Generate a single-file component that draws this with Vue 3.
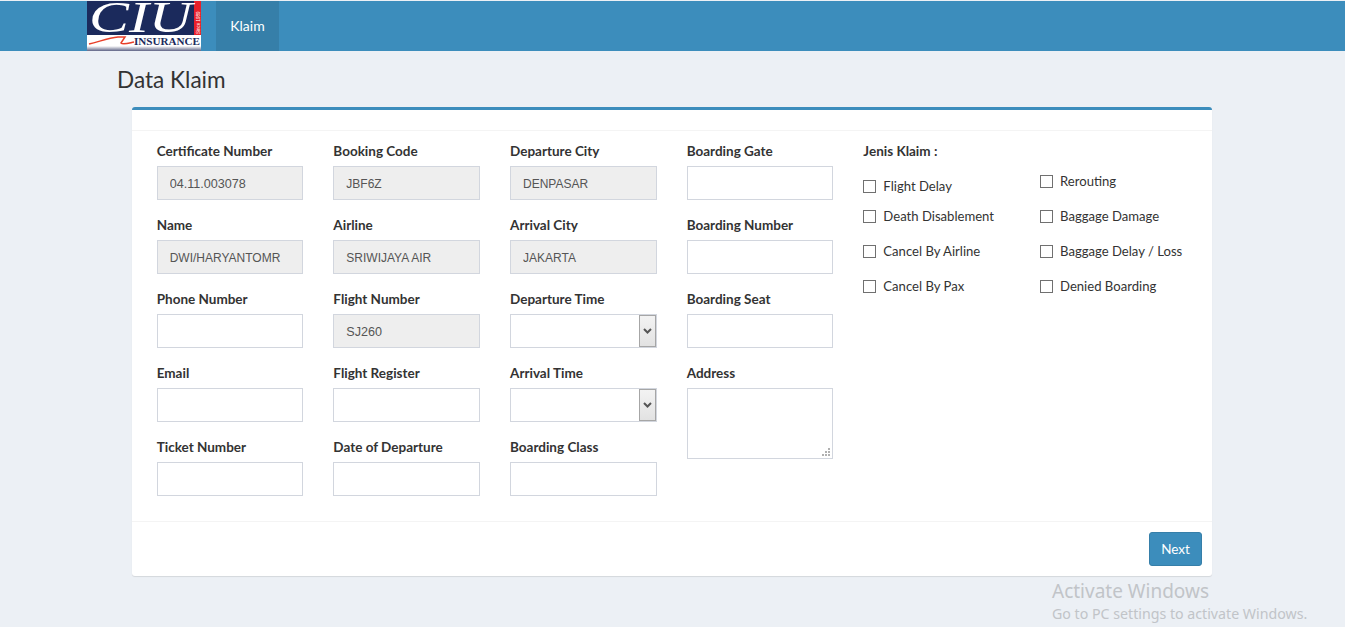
<script setup>
const col1 = [
  { label: 'Certificate Number', value: '04.11.003078', disabled: true, num: true },
  { label: 'Name', value: 'DWI/HARYANTOMR', disabled: true },
  { label: 'Phone Number' },
  { label: 'Email' },
  { label: 'Ticket Number' }
]
const col2 = [
  { label: 'Booking Code', value: 'JBF6Z', disabled: true },
  { label: 'Airline', value: 'SRIWIJAYA AIR', disabled: true },
  { label: 'Flight Number', value: 'SJ260', disabled: true, num: true },
  { label: 'Flight Register' },
  { label: 'Date of Departure' }
]
const col3 = [
  { label: 'Departure City', value: 'DENPASAR', disabled: true },
  { label: 'Arrival City', value: 'JAKARTA', disabled: true },
  { label: 'Departure Time', select: true },
  { label: 'Arrival Time', select: true },
  { label: 'Boarding Class' }
]
const col4 = [
  { label: 'Boarding Gate' },
  { label: 'Boarding Number' },
  { label: 'Boarding Seat' },
  { label: 'Address', area: true }
]
const columns = [col1, col2, col3, col4]
const leftChecks = ['Flight Delay', 'Death Disablement', 'Cancel By Airline', 'Cancel By Pax']
const rightChecks = ['Rerouting', 'Baggage Damage', 'Baggage Delay / Loss', 'Denied Boarding']
</script>

<template>
  <div class="page">
    <header class="navbar">
      <div class="container">
        <svg class="logo" width="114" height="50" viewBox="0 0 114 50">
          <defs>
            <linearGradient id="logoFoot" x1="0" y1="0" x2="0" y2="1">
              <stop offset="0" stop-color="#ffffff" />
              <stop offset="1" stop-color="#5f6485" />
            </linearGradient>
          </defs>
          <rect width="114" height="50" fill="#fff" />
          <rect y="45" width="114" height="5" fill="url(#logoFoot)" />
          <rect width="107" height="34" fill="#1b2a5c" />
          <rect x="107" width="7" height="34" fill="#e8202a" />
          <text x="2" y="31" class="logo-ciu" textLength="103" lengthAdjust="spacingAndGlyphs">CIU</text>
          <text class="logo-since" transform="translate(112.5 33) rotate(-90)">Since 1989</text>
          <path d="M2 43 C14 40 22 37 31 36 L38 36 L34 42 C36 44 42 42 47 41" fill="none" stroke="#e8402a" stroke-width="1.5" />
          <text x="47" y="44" class="logo-ins" textLength="66" lengthAdjust="spacingAndGlyphs">INSURANCE</text>
        </svg>
        <a class="nav-item">Klaim</a>
      </div>
    </header>
    <main class="container">
      <h1 class="title">Data Klaim</h1>
      <section class="box">
        <div class="box-header"></div>
        <div class="box-body">
          <div v-for="(col, i) in columns" :key="i" class="col">
            <div v-for="f in col" :key="f.label" class="group">
              <label class="label">{{ f.label }}</label>
              <div v-if="f.select" class="select-wrap">
                <select class="control"></select>
                <span class="select-btn">
                  <svg width="9" height="6" viewBox="0 0 9 6"><path d="M1 1 L4.5 4.5 L8 1" fill="none" stroke="#555" stroke-width="2" /></svg>
                </span>
              </div>
              <div v-else-if="f.area" class="area-wrap">
                <textarea class="control area"></textarea>
                <svg class="grip" width="8" height="8" viewBox="0 0 8 8" fill="#b0b0b0">
                  <rect x="6" y="0" width="2" height="2" />
                  <rect x="3" y="3" width="2" height="2" />
                  <rect x="6" y="3" width="2" height="2" />
                  <rect x="0" y="6" width="2" height="2" />
                  <rect x="3" y="6" width="2" height="2" />
                  <rect x="6" y="6" width="2" height="2" />
                </svg>
              </div>
              <input v-else class="control" :class="{ num: f.num }" type="text" :value="f.value" :disabled="f.disabled" />
            </div>
          </div>
          <div class="claims">
            <label class="label">Jenis Klaim :</label>
            <div class="claim-cols">
              <div class="claim-col left">
                <label v-for="c in leftChecks" :key="c" class="check"><input type="checkbox" />{{ c }}</label>
              </div>
              <div class="claim-col right">
                <label v-for="c in rightChecks" :key="c" class="check"><input type="checkbox" />{{ c }}</label>
              </div>
            </div>
          </div>
        </div>
        <div class="box-footer"><button class="btn" type="button">Next</button></div>
      </section>
    </main>
    <div class="watermark">
      <div class="wm-title">Activate Windows</div>
      <div class="wm-sub">Go to PC settings to activate Windows.</div>
    </div>
  </div>
</template>

<style>
html, body { margin: 0; background: #ecf0f5; overflow: hidden; }
</style>

<style scoped>
.page {
  position: relative;
  height: 627px;
  background: #ecf0f5;
  font-family: Lato, "Noto Sans", sans-serif;
  font-size: 13.5px;
  color: #333;
  box-sizing: border-box;
  overflow: hidden;
}
.navbar {
  margin-top: 1px;
  height: 50px;
  background: #3c8dbc;
}
.container { width: 1170px; margin: 0 0 0 87px; }
.navbar .container { display: flex; height: 50px; }
.logo { display: block; flex: none; }
.logo-ciu { font-family: "Liberation Serif", serif; font-style: italic; font-size: 44px; fill: #fff; }
.logo-ins { font-family: "Liberation Serif", serif; font-size: 11px; font-weight: 700; fill: #1b2a5c; }
.logo-since { font-family: "Liberation Sans", sans-serif; font-size: 4.5px; fill: #fff; }
.nav-item {
  margin-left: 15px;
  width: 63px;
  text-align: center;
  line-height: 50px;
  background: #367fa9;
  color: #fff;
  font-size: 14px;
}
main { padding: 0 30px; box-sizing: border-box; }
.title { margin: 15px 0 14px; font-size: 22.6px; font-weight: 400; line-height: 27px; color: #333; }
.box {
  margin-left: 15px;
  width: 1080px;
  background: #fff;
  border-top: 3px solid #3c8dbc;
  border-radius: 3px;
  box-shadow: 0 1px 1px rgba(0, 0, 0, 0.1);
}
.box-header { height: 20px; border-bottom: 1px solid #f4f4f4; }
.box-body { display: grid; grid-template-columns: repeat(6, 1fr); padding: 10px 10.3px 10px 9.7px; }
.col, .claims { padding: 0 15px; min-width: 0; }
.claims { grid-column: span 2; padding-right: 0; }
.group { margin-bottom: 15px; }
.label { display: block; height: 20px; line-height: 20px; margin-bottom: 5px; font-weight: 700; white-space: nowrap; }
.control {
  display: block;
  width: 100%;
  height: 34px;
  box-sizing: border-box;
  padding: 7px 12px 5px;
  border: 1px solid #d2d6de;
  border-radius: 0;
  background: #fff;
  color: #555;
  font-family: "Liberation Sans", sans-serif;
  font-size: 12px;
  outline: none;
}
.control.num { font-size: 12.6px; }
.control:disabled { background: #eee; opacity: 1; }
select.control { appearance: none; }
.area { height: 71px; resize: none; }
.area-wrap { position: relative; }
.grip { position: absolute; right: 3px; bottom: 3px; }
.select-wrap { position: relative; }
.select-btn {
  position: absolute;
  top: 1px;
  right: 1px;
  width: 17px;
  height: 32px;
  box-sizing: border-box;
  border: 1px solid #a6a6a6;
  background: linear-gradient(#f3f3f3, #e2e2e2);
  display: flex;
  align-items: center;
  justify-content: center;
}
.claim-cols { display: grid; grid-template-columns: 176.67px 1fr; }
.claim-col { display: flex; flex-direction: column; }
.left { padding-top: 10px; }
.left .check:first-child { margin-bottom: 10px; }
.left .check + .check + .check,
.right .check + .check { margin-top: 15px; }
.right { padding-top: 5px; }
.check { display: flex; align-items: center; height: 20px; white-space: nowrap; font-size: 13.1px; }
.check input {
  appearance: none;
  flex: none;
  width: 13px;
  height: 13px;
  margin: 0 7px 0 0;
  border: 1px solid #707070;
  background: #fff;
  box-sizing: border-box;
}
.box-footer { display: flex; justify-content: flex-end; padding: 10px; border-top: 1px solid #f4f4f4; }
.btn {
  width: 53px;
  height: 34px;
  padding: 0 0 1px;
  border: 1px solid #367fa9;
  border-radius: 3px;
  background: #3c8dbc;
  color: #fff;
  font-family: inherit;
  font-size: 13.5px;
}
.watermark { position: absolute; left: 1052px; top: 578px; color: #c1c4c8; pointer-events: none; white-space: nowrap; font-family: "Noto Sans", sans-serif; }
.wm-title { font-size: 19px; line-height: 26px; }
.wm-sub { font-size: 14.2px; line-height: 20px; }
</style>
